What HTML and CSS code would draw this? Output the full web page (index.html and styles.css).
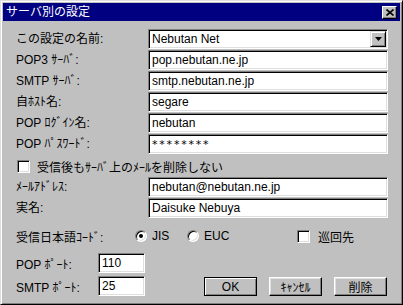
FILE: index.html
```html
<!DOCTYPE html>
<html lang="ja">
<head>
<meta charset="utf-8">
<title>サーバ別の設定</title>
<link rel="stylesheet" href="styles.css">
</head>
<body>
<div class="dialog">
  <div class="titlebar">
    <span class="title">サーバ別の設定</span>
    <span class="close"><svg width="8" height="7" viewBox="0 0 8 7"><path d="M0.5 0.5 L7.5 6.5 M7.5 0.5 L0.5 6.5" stroke="#000" stroke-width="1.6" fill="none"/></svg></span>
  </div>
  <div class="content">
    <div class="row"><span class="lbl">この設定の名前:</span><div class="field combo"><span class="combo-text">Nebutan Net</span><span class="combo-btn"><svg width="7" height="4" viewBox="0 0 7 4"><path d="M0 0h7L3.5 4z" fill="#000"/></svg></span></div></div>
    <div class="row"><span class="lbl">POP3 ｻｰﾊﾞ:</span><div class="field">pop.nebutan.ne.jp</div></div>
    <div class="row"><span class="lbl">SMTP ｻｰﾊﾞ:</span><div class="field">smtp.nebutan.ne.jp</div></div>
    <div class="row"><span class="lbl">自ﾎｽﾄ名:</span><div class="field">segare</div></div>
    <div class="row"><span class="lbl">POP ﾛｸﾞｲﾝ名:</span><div class="field">nebutan</div></div>
    <div class="row"><span class="lbl">POP ﾊﾟｽﾜｰﾄﾞ:</span><div class="field pass">********</div></div>
    <div class="row check-row"><span class="check"></span><span class="check-text">受信後もｻｰﾊﾞ上のﾒｰﾙを削除しない</span></div>
    <div class="row"><span class="lbl">ﾒｰﾙｱﾄﾞﾚｽ:</span><div class="field">nebutan@nebutan.ne.jp</div></div>
    <div class="row"><span class="lbl">実名:</span><div class="field">Daisuke Nebuya</div></div>
    <div class="code-row">
      <span class="code-lbl">受信日本語ｺｰﾄﾞ:</span>
      <span class="opt opt-jis"><span class="radio on"></span><span class="opt-text">JIS</span></span>
      <span class="opt opt-euc"><span class="radio"></span><span class="opt-text">EUC</span></span>
      <span class="opt"><span class="check"></span><span class="opt-text wide">巡回先</span></span>
    </div>
    <div class="bottom">
      <div class="ports">
        <div class="port-row"><span class="plbl">POP ﾎﾟｰﾄ:</span><div class="field port">110</div></div>
        <div class="port-row"><span class="plbl">SMTP ﾎﾟｰﾄ:</span><div class="field port">25</div></div>
      </div>
      <div class="buttons">
        <span class="btn default">OK</span>
        <span class="btn">ｷｬﾝｾﾙ</span>
        <span class="btn">削除</span>
      </div>
    </div>
  </div>
</div>
</body>
</html>
```

FILE: styles.css
```css
html, body {
  margin: 0;
  padding: 0;
  background: #c0c0c0;
}

.dialog {
  width: 403px;
  height: 305px;
  box-sizing: border-box;
  background: #c0c0c0;
  border: 1px solid;
  border-color: #dfdfdf #000 #000 #dfdfdf;
  box-shadow: inset 1px 1px #fff, inset -1px -1px #808080;
  padding: 2px;
  font-family: "Liberation Sans", "Noto Sans CJK JP", sans-serif;
  font-size: 12px;
  color: #000;
  overflow: hidden;
}

.titlebar {
  height: 18px;
  background: #000080;
  color: #fff;
  display: flex;
  align-items: center;
  justify-content: space-between;
  padding: 0 3px;
}

.title {
  font-size: 12px;
  line-height: 18px;
}

.close {
  width: 13px;
  height: 11px;
  background: #c0c0c0;
  border: 1px solid;
  border-color: #fff #000 #000 #fff;
  box-shadow: inset -1px -1px #808080;
  display: flex;
  align-items: center;
  justify-content: center;
}

.content {
  padding: 8px 12px 0 13px;
}

.row {
  display: flex;
  align-items: flex-start;
  height: 21px;
}

.lbl {
  width: 132px;
  line-height: 20px;
  flex: none;
}

.field {
  box-sizing: border-box;
  width: 240px;
  height: 20px;
  background: #fff;
  border: 1px solid;
  border-color: #808080 #fff #fff #808080;
  box-shadow: inset 1px 1px #000, inset -1px -1px #dfdfdf;
  padding: 0 3px;
  line-height: 18px;
  white-space: nowrap;
  overflow: hidden;
}

.pass {
  font-family: "DejaVu Sans", sans-serif;
  font-size: 11px;
  line-height: 20px;
  letter-spacing: 1.8px;
}

.combo {
  display: flex;
  justify-content: space-between;
  align-items: center;
  padding-right: 1px;
}

.combo-btn {
  box-sizing: border-box;
  width: 16px;
  height: 16px;
  background: #c0c0c0;
  border: 1px solid;
  border-color: #dfdfdf #000 #000 #dfdfdf;
  box-shadow: inset 1px 1px #fff, inset -1px -1px #808080;
  display: flex;
  align-items: center;
  justify-content: center;
}

.check-row {
  height: 22px;
  align-items: center;
  padding-left: 1px;
}

.check {
  box-sizing: border-box;
  width: 13px;
  height: 13px;
  background: #fff;
  border: 1px solid;
  border-color: #808080 #fff #fff #808080;
  box-shadow: inset 1px 1px #000, inset -1px -1px #dfdfdf;
  flex: none;
}

.check-text {
  margin-left: 7px;
}

.code-row {
  display: flex;
  align-items: center;
  height: 34px;
}

.code-lbl {
  width: 119px;
  flex: none;
}

.opt {
  display: flex;
  align-items: center;
}

.opt-jis {
  width: 52px;
}

.opt-euc {
  width: 110px;
}

.radio {
  position: relative;
  box-sizing: border-box;
  width: 12px;
  height: 12px;
  border-radius: 50%;
  background: #fff;
  border: 1px solid;
  border-color: #808080 #fff #fff #808080;
  box-shadow: inset 1px 1px #000, inset -1px -1px #dfdfdf;
  flex: none;
}

.radio.on::after {
  content: "";
  position: absolute;
  left: 3px;
  top: 3px;
  width: 4px;
  height: 4px;
  border-radius: 50%;
  background: #000;
}

.opt-text {
  margin-left: 5px;
}

.opt-text.wide {
  margin-left: 8px;
}

.bottom {
  display: flex;
  align-items: flex-end;
}

.ports {
  display: flex;
  flex-direction: column;
  gap: 3px;
  width: 188px;
}

.port-row {
  display: flex;
  align-items: center;
  height: 20px;
}

.plbl {
  width: 82px;
  flex: none;
}

.port {
  width: 47px;
}

.buttons {
  display: flex;
  gap: 12px;
}

.btn {
  box-sizing: border-box;
  width: 53px;
  height: 19px;
  background: #c0c0c0;
  border: 1px solid;
  border-color: #fff #000 #000 #fff;
  box-shadow: inset -1px -1px #808080, inset 1px 1px #dfdfdf;
  display: flex;
  align-items: center;
  justify-content: center;
}

.btn.default {
  border-color: #000;
  box-shadow: inset 1px 1px #fff, inset -1px -1px #808080;
}
```
